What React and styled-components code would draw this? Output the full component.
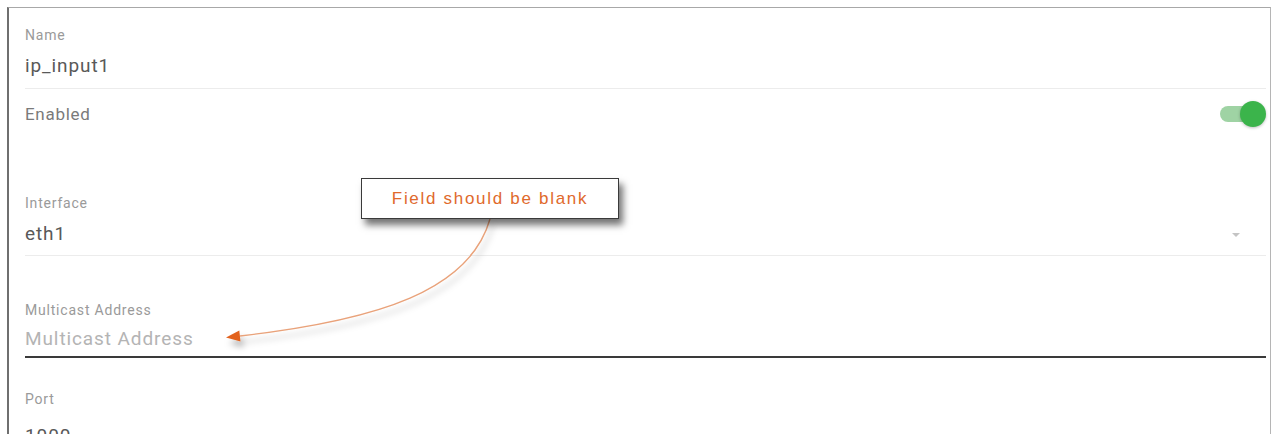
import React from "react";
import styled, { createGlobalStyle } from "styled-components";

const Global = createGlobalStyle`
  html, body {
    margin: 0;
    padding: 0;
    background: #ffffff;
    overflow: hidden;
  }
  body {
    font-family: Roboto, "Noto Sans", Arial, sans-serif;
  }
`;

const Card = styled.div`
  position: relative;
  margin: 7px 0 0 7px;
  width: 1264px;
  min-height: 520px;
  background: #fff;
  border-left: 2px solid #6f6f6f;
  border-top: 1px solid #a8a8a8;
  border-right: 1px solid #b5b5b5;
  padding: 0 4px 0 16px;
  box-sizing: border-box;
`;

const Field = styled.div`
  display: flex;
  flex-direction: column;
  padding-top: ${(p) => p.$top}px;
  padding-bottom: ${(p) => p.$bottom}px;
  border-bottom: ${(p) =>
    p.$focused ? "2px solid #3a3a3a" : p.$plain ? "none" : "1px solid #ececec"};
`;

const Label = styled.div`
  font-size: 14px;
  line-height: 16px;
  color: #9a9a9a;
  letter-spacing: 0.8px;
`;

const ValueRow = styled.div`
  display: flex;
  align-items: center;
  justify-content: space-between;
  margin-top: ${(p) => p.$gap ?? 10}px;
  height: 26px;
`;

const Value = styled.div`
  font-size: 19px;
  line-height: 26px;
  color: ${(p) => (p.$placeholder ? "#b4b4b4" : "#595959")};
  letter-spacing: 0.9px;
`;

const ToggleRow = styled.div`
  display: flex;
  align-items: flex-start;
  justify-content: space-between;
  padding-top: 13px;
  height: 72px;
`;

const ToggleLabel = styled.div`
  font-size: 17px;
  line-height: 24px;
  color: #7a7a7a;
  letter-spacing: 0.7px;
`;

const Switch = styled.div`
  position: relative;
  width: 46px;
  height: 26px;
  margin-top: -1px;
`;

const Track = styled.div`
  position: absolute;
  left: 0;
  top: 5px;
  width: 36px;
  height: 16px;
  border-radius: 8px;
  background: #9fd3a4;
`;

const Knob = styled.div`
  position: absolute;
  right: 0;
  top: 0;
  width: 26px;
  height: 26px;
  border-radius: 50%;
  background: #3bb44b;
  box-shadow: 0 1px 3px rgba(0, 0, 0, 0.25);
`;

const Caret = styled.div`
  width: 0;
  height: 0;
  margin-right: 26px;
  margin-top: 2px;
  border-left: 4px solid transparent;
  border-right: 4px solid transparent;
  border-top: 4px solid #c4c4c4;
`;

const Overlay = styled.svg`
  position: absolute;
  left: 0;
  top: 0;
  width: 1264px;
  height: 440px;
  pointer-events: none;
  overflow: visible;
`;

const Callout = styled.div`
  position: absolute;
  left: 352px;
  top: 170px;
  width: 258px;
  height: 41px;
  box-sizing: border-box;
  background: #fff;
  border: 1px solid #3a3a3a;
  box-shadow: 4px 6px 7px rgba(0, 0, 0, 0.55);
  display: flex;
  align-items: center;
  justify-content: center;
  font-family: "Liberation Sans", Arial, sans-serif;
  font-size: 17px;
  letter-spacing: 1.7px;
  color: #e0692c;
`;

export default function App() {
  return (
    <>
      <Global />
      <Card>
        <Field $top={19} $bottom={9}>
          <Label>Name</Label>
          <ValueRow>
            <Value>ip_input1</Value>
          </ValueRow>
        </Field>

        <ToggleRow>
          <ToggleLabel>Enabled</ToggleLabel>
          <Switch>
            <Track />
            <Knob />
          </Switch>
        </ToggleRow>

        <Field $top={21} $bottom={8}>
          <Label>Interface</Label>
          <ValueRow>
            <Value>eth1</Value>
            <Caret />
          </ValueRow>
        </Field>

        <Field $top={46} $bottom={4} $focused>
          <Label>Multicast Address</Label>
          <ValueRow $gap={8}>
            <Value $placeholder>Multicast Address</Value>
          </ValueRow>
        </Field>

        <Field $top={33} $bottom={8} $plain>
          <Label>Port</Label>
          <ValueRow $gap={16}>
            <Value>1000</Value>
          </ValueRow>
        </Field>

        {/* annotation arrow from the note down to the empty field */}
        <Overlay viewBox="0 0 1264 440">
          <defs>
            <filter id="arrowShade" x="-20%" y="-20%" width="140%" height="160%">
              <feDropShadow dx="3" dy="6" stdDeviation="3" floodColor="#000" floodOpacity="0.28" />
            </filter>
          </defs>
          <g filter="url(#arrowShade)">
            <path
              d="M 481 211 C 461 282, 371 312, 231 328"
              fill="none"
              stroke="#e9a27a"
              strokeWidth="1.4"
            />
            <polygon points="217,329.5 231.5,333.5 230.3,322.5" fill="#e2621f" />
          </g>
        </Overlay>
        <Callout>Field should be blank</Callout>
      </Card>
    </>
  );
}
